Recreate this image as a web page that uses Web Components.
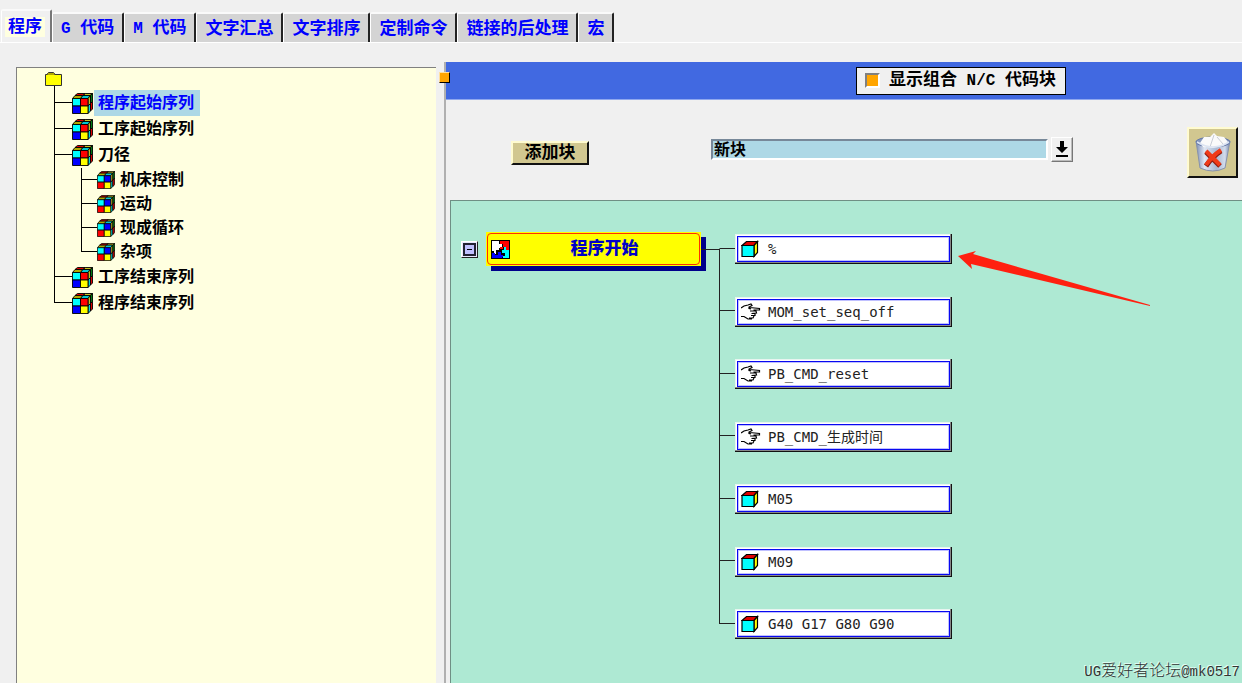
<!DOCTYPE html>
<html lang="zh-CN">
<head>
<meta charset="utf-8">
<title>程序</title>
<style>
  html, body { margin: 0; height: 100%; }
  body { overflow: hidden; background: #f0f0f0; color: #000; font: bold 17px/20px "Liberation Sans", "Noto Sans CJK SC", sans-serif; }
</style>
</head>
<body>
<post-app></post-app>

<script>
const define = (name, html, init) => customElements.define(name, class extends HTMLElement {
  constructor() {
    super();
    this.attachShadow({ mode: 'open' }).innerHTML = '<style>*{box-sizing:border-box}button,select{font:inherit;color:inherit;margin:0;border:0;border-radius:0}</style>' + html;
  }
  connectedCallback() { if (init) init(this, this.shadowRoot); }
});

/* Two by two by two cube; the variant swaps the front colours. */
define('cube-icon', `
  <style>
    :host { display: block; flex: none; width: 21px; height: 21px; }
    :host([small]) { width: 18px; height: 18px; }
    svg { display: block; width: 100%; height: 100%; }
  </style>
  <svg viewBox="0 0 21 21" stroke="#000" stroke-width=".9">
    <path fill="#e00000" d="M3 2.5 5.5.5h8l-2.500 2z"/><path fill="#c8c020" d="M11 2.500 13.500.5h7l-2.500 2z"/>
    <path fill="#b0a800" d="M.5 5.500 3 2.500h8l-2.500 3z"/><path fill="#00c8d0" d="M8.500 5.500 11 2.500h7l-2 3z"/>
    <path fill="#c8c020" d="M16 5.500l2.500-3v8L16 13z"/><path fill="#00d8e0" d="M16 13l2.500-2.500v7.500L16 20.500z"/>
    <path fill="#007a10" d="M18.500 2.500l2-2v8l-2 2z"/><path fill="#e00000" d="M18.500 10.500l2-2v7.500l-2 2z"/>
    <path fill="#0ff" d="M.5 5.500h8V13h-8z"/><path class="b" d="M8.500 5.500H16V13H8.500z"/>
    <path class="c" d="M.5 13h8v7.500h-8z"/><path fill="#ff0" d="M8.500 13H16v7.500H8.500z"/>
  </svg>`, (host, root) => {
    const s = host.hasAttribute('small');
    root.querySelector('.b').setAttribute('fill', s ? '#00f' : '#f00');
    root.querySelector('.c').setAttribute('fill', s ? '#f00' : '#00f');
  });

define('tab-item', `
  <style>
    :host { display: block; }
    button { display: block; height: 30px; padding: 1px 8px 0; background: #d4d4d4; color: #00f; white-space: nowrap;
      border-left: 1px solid #fff; border-top: 2px solid #fafafa; border-right: 2px solid #222; border-radius: 2px 2px 0 0; }
    :host([selected]) button { height: 33px; padding: 0 5px 0 3px; background: #f0f0f0; border-right-color: #777; }
    span { display: block; }
    :host([selected]) span { background: #ffffe0; padding: 0 3px; }
  </style>
  <button role="tab"><span><slot></slot></span></button>`);

define('tab-bar', `
  <style>
    :host { display: flex; align-items: flex-end; height: 43px; padding-left: 1px; border-bottom: 1px solid #fff; }
    i { font: bold 16px/20px "Liberation Mono", monospace; white-space: pre; }
  </style>
  <tab-item selected>程序</tab-item><tab-item><i>G </i>代码</tab-item><tab-item><i>M </i>代码</tab-item>
  <tab-item>文字汇总</tab-item><tab-item>文字排序</tab-item><tab-item>定制命令</tab-item>
  <tab-item>链接的后处理</tab-item><tab-item>宏</tab-item>`);

define('tree-node', `
  <style>
    :host { display: flex; --row: 26px; --stub: 18px; }
    :host([small]) { --row: 24px; --stub: 16px; }
    .rail { display: flex; flex-direction: column; flex: none; width: var(--stub); }
    .stub { height: calc(var(--row) / 2); border-left: 1px solid #000; border-bottom: 1px solid #000; }
    .rest { flex: 1; border-left: 1px solid #000; }
    :host([last]) .rest { border: 0; }
    .row { display: flex; align-items: center; height: var(--row); }
    button { height: 100%; margin-left: 1px; padding: 0 4px; background: none; white-space: nowrap; }
    :host([selected]) button { background: #add8e6; color: #00f; padding-right: 6px; }
    .kids { padding-left: 9px; }
  </style>
  <div class="rail"><div class="stub"></div><div class="rest"></div></div>
  <div><div class="row"><button></button></div><div class="kids"><slot></slot></div></div>`,
  (host, root) => {
    const b = root.querySelector('button');
    b.textContent = host.getAttribute('label');
    const icon = document.createElement('cube-icon');
    icon.toggleAttribute('small', host.hasAttribute('small'));
    b.before(icon);
  });

define('sequence-tree', `
  <style>
    :host { display: block; min-height: 0; background: #ffffe0; border-left: 1px solid #808080; border-top: 1px solid #808080;
      padding-left: 28px; font-size: 16px; overflow: hidden; }
    .root { height: 22px; padding-top: 4px; }
    .root svg { display: block; }
    .list { padding-left: 9px; }
  </style>
  <div class="root"><svg width="18" height="18" viewBox="0 0 18 18">
    <path d="M2.500 3.500v-2l1-1h5l1 1v2" fill="#b0a800" stroke="#333"/>
    <path d="M.5 2.500h16v11H.5z" fill="#ff0" stroke="#333"/><path d="M2.500 2.500h7" stroke="#b0a800"/>
    <path d="M9.500 14v4" stroke="#000"/></svg></div>
  <div class="list">
    <tree-node label="程序起始序列" selected></tree-node>
    <tree-node label="工序起始序列"></tree-node>
    <tree-node label="刀径">
      <tree-node small label="机床控制"></tree-node><tree-node small label="运动"></tree-node>
      <tree-node small label="现成循环"></tree-node><tree-node small last label="杂项"></tree-node>
    </tree-node>
    <tree-node label="工序结束序列"></tree-node>
    <tree-node label="程序结束序列" last></tree-node>
  </div>`);

define('pane-splitter', `
  <style>
    :host { display: block; position: relative; border-right: 2px solid #b0b0b0; }
    button { position: absolute; top: 10px; right: -6px; width: 11px; height: 11px; padding: 0; background: #ffa500;
      border: 1px solid; border-color: #ffe0a0 #000 #000 #ffe0a0; }
  </style>
  <button aria-label="调整窗格"></button>`);

define('display-bar', `
  <style>
    :host { display: flex; align-items: center; justify-content: flex-end; height: 38px; padding-right: 176px;
      background: #4169e1; border-bottom: 1px solid #90a8ee; }
    label { display: flex; align-items: center; height: 28px; padding: 0 9px 0 8px; background: #f0f0f0; border: 1px solid #000; white-space: pre; }
    input { appearance: none; width: 15px; height: 15px; margin: 0 9px 0 0; background: #f0f0f0; border: 2px solid; border-color: #808080 #fff #fff #808080; }
    input:checked { background: #ffa500; }
    i { font: bold 16px/20px "Liberation Mono", monospace; }
  </style>
  <label><input type="checkbox" checked><span>显示组合<i> N/C </i>代码块</span></label>`);

define('block-toolbar', `
  <style>
    :host { display: flex; align-items: center; height: 100px; padding: 5px 4px 0 65px; }
    .raised { flex: none; background: #d1c790; border: 2px solid; border-color: #fffbd0 #111 #111 #fffbd0; padding: 0; }
    .add { width: 78px; height: 24px; line-height: 20px; }
    .combo { display: flex; align-items: center; flex: 1; gap: 3px; margin: 0 114px 6px 122px; }
    select { appearance: none; flex: 1; min-width: 0; height: 21px; padding: 0 1px; background: #add8e6; font-size: 16px; line-height: 18px;
      border: 2px solid; border-color: #789 #fff #fff #789; }
    .drop { flex: none; width: 22px; height: 25px; padding: 0; background: #f0f0f0; border: 1px solid; border-color: #fff #777 #777 #fff; box-shadow: inset -1px -1px #bbb; }
    .trash { width: 51px; height: 51px; }
    svg { display: block; margin: auto; }
  </style>
  <button class="raised add">添加块</button>
  <div class="combo">
    <select aria-label="块"><option>新块</option></select>
    <button class="drop" aria-label="展开"><svg width="14" height="17" viewBox="0 0 14 17"><path d="M5 0h4v6h4l-6 6-6-6h4zM1 14h12v2H1z"/></svg></button>
  </div>
  <button class="raised trash" aria-label="删除">
    <svg width="36" height="40" viewBox="0 0 36 40">
      <defs><linearGradient id="g"><stop offset="0" stop-color="#7c8db5"/><stop offset=".25" stop-color="#dfe6f2"/><stop offset=".6" stop-color="#a9b8d2"/><stop offset=".85" stop-color="#d3dcec"/><stop offset="1" stop-color="#7183ad"/></linearGradient></defs>
      <path d="M1 8 5 35q13 6 25 0L35 8z" fill="url(#g)" stroke="#8792ac"/>
      <ellipse cx="18" cy="9" rx="17" ry="5" fill="#8496bd" stroke="#6478a8"/>
      <path d="M5 10 9 4l6 0 4-4 3 3 7 1 4 5-5 4-10 2-10-1z" fill="#fafafa"/>
      <path d="M19 2 15 14M22 4l6 7" stroke="#c8ccd5" fill="none"/>
      <path d="M2 9q16 10 32 0" stroke="#dce4f2" stroke-width="1.500" fill="none"/>
      <path d="M11 19 25 33M26 18Q17 24 11 33" stroke="#8f1c10" stroke-width="5" fill="none"/>
      <path d="M11 18 25 32M26 17Q17 23 11 32" stroke="#f03a18" stroke-width="4" fill="none"/>
    </svg>
  </button>`);

define('block-card', `
  <style>
    :host { display: flex; height: 62px; }
    :host(:nth-of-type(even)) { height: 63px; }
    .rail { display: flex; flex-direction: column; flex: none; width: 16px; }
    .up { height: 31px; border-left: 1px solid #222; border-bottom: 1px solid #222; }
    .down { flex: 1; border-left: 1px solid #222; }
    :host([first]) .up { border-left-color: transparent; }
    :host([last]) .down { border-left-color: transparent; }
    button { align-self: center; width: 217px; height: 30px; padding: 2px; background: #fff;
      box-shadow: inset -1px -1px #111, inset -2px -2px #888, inset 1px 1px #e8f4f0; }
    .face { display: flex; align-items: center; gap: 7px; height: 100%; padding: 0 3px; border: 1px solid #0808f0; box-shadow: inset 0 0 0 1px #c0c0ff;
      font: 14px/20px "DejaVu Sans Mono", "Noto Sans CJK SC", monospace; color: #222; white-space: pre; text-align: left; }
    svg { flex: none; }
  </style>
  <div class="rail"><div class="up"></div><div class="down"></div></div>
  <button><span class="face"><svg width="20" height="18" viewBox="0 0 20 18"></svg><slot></slot></span></button>`,
  (host, root) => {
    root.querySelector('svg').innerHTML = host.getAttribute('kind') === 'hand'
      ? '<path fill="none" stroke="#000" stroke-width="1.200" d="M0 5 3 3l4-1 3-1 1 1.500-3 1.500 0 1.500 2 .5M8.500 4.500 18.500 5.500v1.500l-6 0M9 8l6 0 .5 2-5 .5M14 10.500l0 2-4 0M13 13l-1 2H8M0 13.500l3 0 4 2.500h4"/>'
      : '<g stroke="#000" stroke-width="1.200"><path fill="#e00000" d="M1 5.500 5.500 1.500h11L13 5.500z"/><path fill="#ff0" d="M13 5.500l3.500-4v11l-3.500 4z"/><path fill="#0ff" d="M1 5.500h12v11H1z"/></g>';
  });

define('program-canvas', `
  <style>
    :host { display: block; position: relative; min-height: 0; margin-left: 4px; background: #aee9d3; overflow: hidden;
      border-left: 1px solid #6f8f84; border-top: 1px solid #6f8f84; }
    .flow { display: flex; align-items: flex-start; padding: 17px 0 0 10px; }
    .head { display: flex; align-items: center; height: 62px; }
    .fold { width: 17px; height: 17px; padding: 1px; background: #e8e8ff; border: 1px solid; border-color: #fff #222 #222 #fff; }
    .fold svg, .event svg { display: block; flex: none; }
    .event { display: flex; align-items: center; width: 215px; height: 34px; margin-left: 8px; padding: 1px; background: #ff0; box-shadow: 5px 5px #00008b; color: #0000c8; }
    .in { display: flex; align-items: center; width: 100%; height: 100%; padding: 0 0 0 3px; border: 1px solid #ff3000; border-radius: 4px; }
    .in b { flex: 1; }
    .join { width: 18px; height: 1px; background: #222; }
    svg.arrow { position: absolute; left: 506px; top: 50px; }
    .mark { position: absolute; right: 2px; bottom: 1px; font: 16px/20px "Noto Sans CJK SC", sans-serif; font-weight: 300; color: #333; text-shadow: -1px -1px #e4fff6; white-space: nowrap; }
    .mark i { font: 14px/20px "Liberation Mono", monospace; }
  </style>
  <div class="flow">
    <div class="head">
      <button class="fold" aria-label="折叠"><svg width="13" height="13"><path d="M1 1h11v11H1z" fill="#c0c0ff" stroke="#223" stroke-width="2"/><path d="M4 6.500h5" stroke="#000"/></svg></button>
      <button class="event"><span class="in">
        <svg width="19" height="19" viewBox="0 0 19 19"><path d="M0 0h19v19H0z"/>
          <path d="M1 1h7v3h3v4H8v2H5v4H3v-3H1z" fill="#fff"/><path d="M9 1h9v9h-3V7h-3v2H9V7h3V4H9z" fill="#f00"/>
          <path d="M1 13h3v2h3v-3h3v3h2v2h-1v1H1z" fill="#00f"/><path d="M11 10h2V7h2v3h3v8h-6v-2h2v-3h-3z" fill="#0ff"/></svg>
        <b>程序开始</b></span></button>
      <div class="join"></div>
    </div>
    <div>
      <block-card first>%</block-card>
      <block-card kind="hand">MOM_set_seq_off</block-card>
      <block-card kind="hand">PB_CMD_reset</block-card>
      <block-card kind="hand">PB_CMD_生成时间</block-card>
      <block-card>M05</block-card>
      <block-card>M09</block-card>
      <block-card last>G40 G17 G80 G90</block-card>
    </div>
  </div>
  <svg class="arrow" width="195" height="58" viewBox="0 0 195 58"><path fill="#ff2010" d="M1 5 19 0 16 3 193 54V55L14 13 15 18z"/></svg>
  <div class="mark"><i>UG</i>爱好者论坛<i>@mk0517</i></div>`);

define('post-app', `
  <style>
    :host { display: flex; flex-direction: column; height: 100vh; }
    main { display: grid; grid-template-columns: 420px 10px minmax(0, 1fr); flex: 1; min-height: 0; padding-left: 16px; }
    sequence-tree { margin-top: 24px; }
    pane-splitter { margin-top: 19px; }
    section { display: flex; flex-direction: column; min-height: 0; padding-top: 19px; }
    program-canvas { flex: 1; }
  </style>
  <tab-bar role="tablist"></tab-bar>
  <main>
    <sequence-tree></sequence-tree>
    <pane-splitter></pane-splitter>
    <section><display-bar></display-bar><block-toolbar></block-toolbar><program-canvas></program-canvas></section>
  </main>`);
</script>
</body>
</html>
